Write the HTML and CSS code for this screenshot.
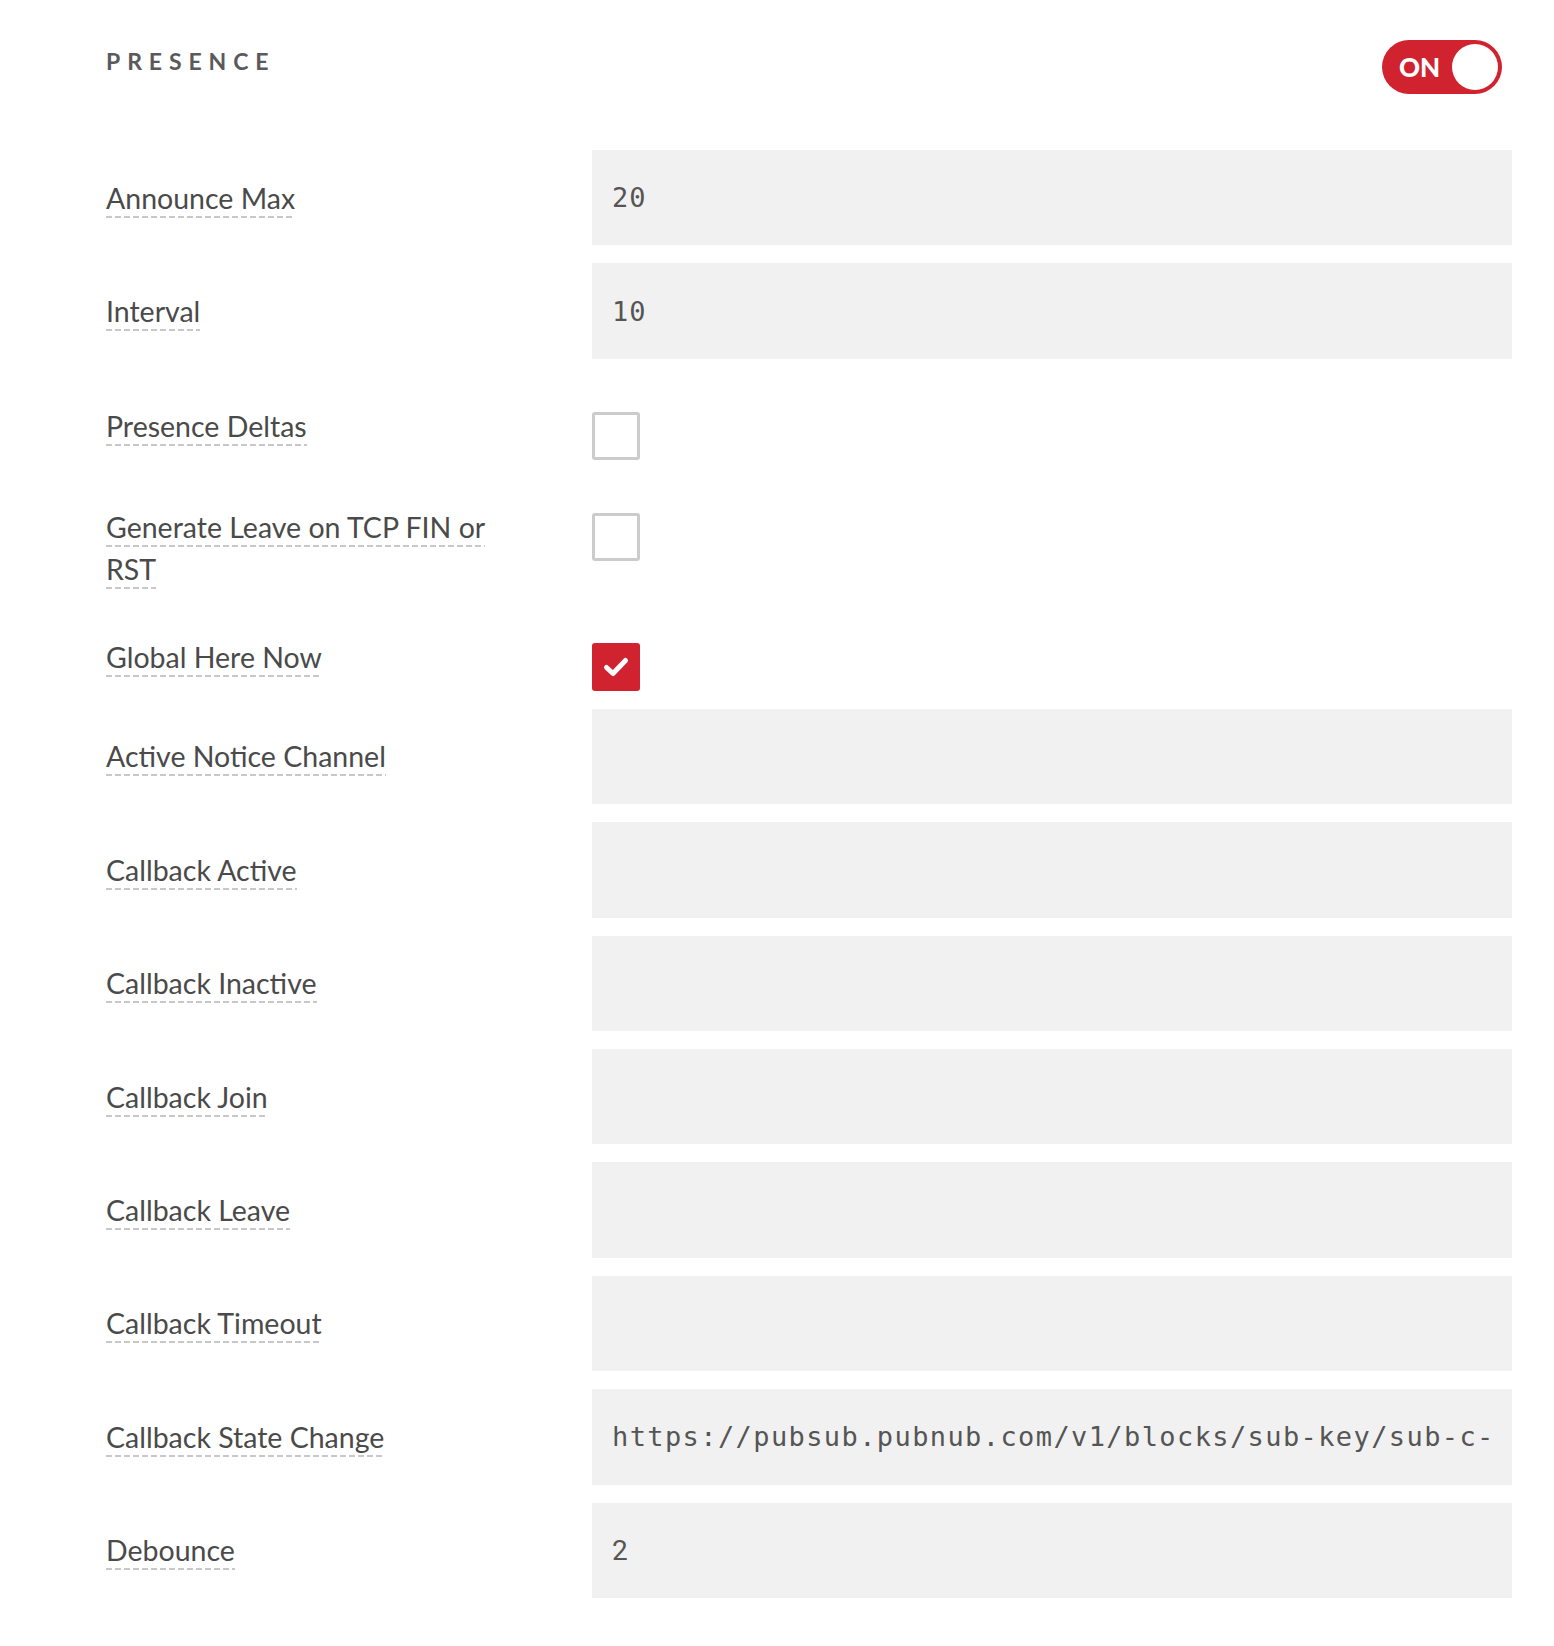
FILE: index.html
```html
<!DOCTYPE html>
<html lang="en">
<head>
<meta charset="utf-8">
<title>Presence</title>
<link rel="stylesheet" href="styles.css">
</head>
<body>
<section class="panel">
  <header class="panel-head">
    <h2 class="title">PRESENCE</h2>
    <div class="toggle"><span class="toggle-text">ON</span><span class="knob"></span></div>
  </header>

  <div class="rows">
    <div class="row">
      <div class="label"><span class="tip">Announce Max</span></div>
      <div class="field mono">20</div>
    </div>
    <div class="row">
      <div class="label"><span class="tip">Interval</span></div>
      <div class="field mono">10</div>
    </div>
    <div class="row row-check">
      <div class="label"><span class="tip">Presence Deltas</span></div>
      <div class="check"></div>
    </div>
    <div class="row row-check">
      <div class="label"><span class="tip">Generate Leave on TCP FIN or RST</span></div>
      <div class="check"></div>
    </div>
    <div class="row row-check">
      <div class="label"><span class="tip">Global Here Now</span></div>
      <div class="check checked">
        <svg viewBox="0 0 48 48" width="48" height="48"><path d="M14.5 24.5 L21 30.5 L33.5 17.5" fill="none" stroke="#fff" stroke-width="5" stroke-linecap="round" stroke-linejoin="round"/></svg>
      </div>
    </div>
    <div class="row">
      <div class="label"><span class="tip">Active Notice Channel</span></div>
      <div class="field"></div>
    </div>
    <div class="row">
      <div class="label"><span class="tip">Callback Active</span></div>
      <div class="field"></div>
    </div>
    <div class="row">
      <div class="label"><span class="tip">Callback Inactive</span></div>
      <div class="field"></div>
    </div>
    <div class="row">
      <div class="label"><span class="tip">Callback Join</span></div>
      <div class="field"></div>
    </div>
    <div class="row">
      <div class="label"><span class="tip">Callback Leave</span></div>
      <div class="field"></div>
    </div>
    <div class="row">
      <div class="label"><span class="tip">Callback Timeout</span></div>
      <div class="field"></div>
    </div>
    <div class="row">
      <div class="label"><span class="tip">Callback State Change</span></div>
      <div class="field mono url"><span class="url-text">https://pubsub.pubnub.com/v1/blocks/sub-key/sub-c-</span></div>
    </div>
    <div class="row">
      <div class="label"><span class="tip">Debounce</span></div>
      <div class="field sans">2</div>
    </div>
  </div>
</section>
</body>
</html>
```

FILE: styles.css
```css
html, body {
  margin: 0;
  padding: 0;
  background: #fff;
}

body {
  font-family: "Lato", "Open Sans", sans-serif;
  color: #4a4a4a;
}

.panel {
  padding: 40px 42px 40px 106px;
}

.panel-head {
  display: flex;
  justify-content: space-between;
  align-items: flex-start;
  height: 110px;
  padding-right: 10px;
}

.title {
  margin: 6px 0 0 0;
  font-size: 23px;
  font-weight: 700;
  letter-spacing: 0.3em;
  color: #5a5a5c;
  line-height: 30px;
}

.toggle {
  width: 120px;
  height: 54px;
  box-sizing: border-box;
  border-radius: 27px;
  background: #d0232f;
  display: flex;
  align-items: center;
  justify-content: space-between;
  padding: 0 4px 0 17px;
}

.toggle-text {
  color: #fff;
  font-family: "Lato", sans-serif;
  font-weight: 900;
  font-size: 26px;
}

.knob {
  width: 46px;
  height: 46px;
  border-radius: 50%;
  background: #fff;
}

.rows {
  display: flex;
  flex-direction: column;
  gap: 18px;
}

.row {
  display: grid;
  grid-template-columns: 486px 1fr;
  align-items: center;
}

.label {
  font-size: 28.5px;
  line-height: 42px;
  padding-right: 60px;
}

.tip {
  padding-bottom: 3px;
  background-image: linear-gradient(to right, #c8c8c8 6px, transparent 6px);
  background-size: 9px 2px;
  background-repeat: repeat-x;
  background-position: 0 100%;
  -webkit-box-decoration-break: clone;
  box-decoration-break: clone;
}

.field {
  height: 95.4px;
  background: #f1f1f1;
  box-sizing: border-box;
  padding: 0 18px 0 20px;
  display: flex;
  align-items: center;
  color: #555;
  overflow: hidden;
  white-space: nowrap;
}

.mono {
  font-family: "DejaVu Sans Mono", "Liberation Mono", monospace;
  font-size: 27px;
  letter-spacing: 1px;
}

.url {
  letter-spacing: 1.4px;
}

.url-text {
  display: block;
  overflow: hidden;
  width: 100%;
  white-space: nowrap;
}

.sans {
  font-family: "Roboto", "Liberation Sans", sans-serif;
  font-size: 28px;
}

.row-check {
  align-items: start;
  padding-top: 28px;
}

.check {
  margin-top: 7px;
  width: 48px;
  height: 48px;
  box-sizing: border-box;
  border: 3px solid #cccccc;
  border-radius: 3px;
  background: #fff;
}

.check.checked {
  border: none;
  background: #d0232f;
}

.check svg {
  display: block;
}
```
